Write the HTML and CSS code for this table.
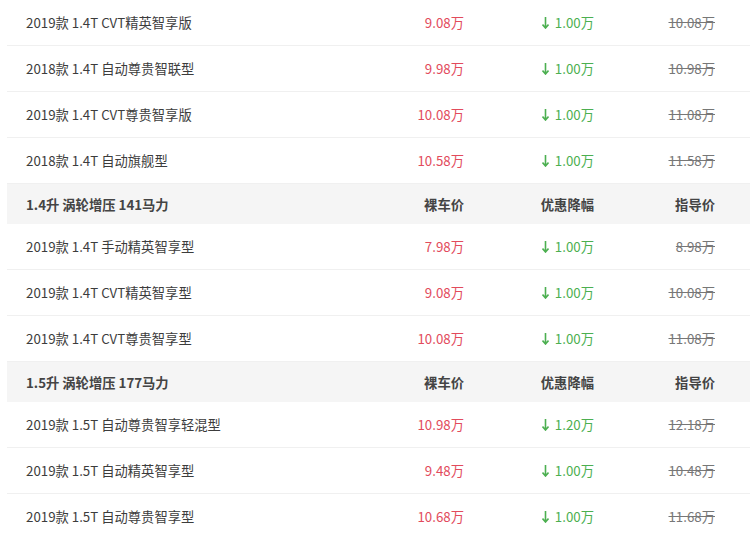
FILE: index.html
```html
<!DOCTYPE html>
<html lang="zh-CN">
<head>
    <meta charset="UTF-8">
    <title>车型报价</title>
    <link rel="stylesheet" href="styles.css">
</head>
<body>
    <div class="price-table">
        <div class="row"><span class="name">2019款 1.4T CVT精英智享版</span><span class="price">9.08万</span><span class="cut"><i class="arrow"></i>1.00万</span><span class="guide">10.08万</span></div>
        <div class="row"><span class="name">2018款 1.4T 自动尊贵智联型</span><span class="price">9.98万</span><span class="cut"><i class="arrow"></i>1.00万</span><span class="guide">10.98万</span></div>
        <div class="row"><span class="name">2019款 1.4T CVT尊贵智享版</span><span class="price">10.08万</span><span class="cut"><i class="arrow"></i>1.00万</span><span class="guide">11.08万</span></div>
        <div class="row"><span class="name">2018款 1.4T 自动旗舰型</span><span class="price">10.58万</span><span class="cut"><i class="arrow"></i>1.00万</span><span class="guide">11.58万</span></div>

        <div class="row head"><span class="name">1.4升 涡轮增压 141马力</span><span>裸车价</span><span>优惠降幅</span><span>指导价</span></div>
        <div class="row"><span class="name">2019款 1.4T 手动精英智享型</span><span class="price">7.98万</span><span class="cut"><i class="arrow"></i>1.00万</span><span class="guide">8.98万</span></div>
        <div class="row"><span class="name">2019款 1.4T CVT精英智享型</span><span class="price">9.08万</span><span class="cut"><i class="arrow"></i>1.00万</span><span class="guide">10.08万</span></div>
        <div class="row"><span class="name">2019款 1.4T CVT尊贵智享型</span><span class="price">10.08万</span><span class="cut"><i class="arrow"></i>1.00万</span><span class="guide">11.08万</span></div>

        <div class="row head"><span class="name">1.5升 涡轮增压 177马力</span><span>裸车价</span><span>优惠降幅</span><span>指导价</span></div>
        <div class="row"><span class="name">2019款 1.5T 自动尊贵智享轻混型</span><span class="price">10.98万</span><span class="cut"><i class="arrow"></i>1.20万</span><span class="guide">12.18万</span></div>
        <div class="row"><span class="name">2019款 1.5T 自动精英智享型</span><span class="price">9.48万</span><span class="cut"><i class="arrow"></i>1.00万</span><span class="guide">10.48万</span></div>
        <div class="row"><span class="name">2019款 1.5T 自动尊贵智享型</span><span class="price">10.68万</span><span class="cut"><i class="arrow"></i>1.00万</span><span class="guide">11.68万</span></div>
    </div>
</body>
</html>
```

FILE: styles.css
```css
* {
    margin: 0;
    padding: 0;
    box-sizing: border-box;
}

body {
    font-family: "Noto Sans CJK SC", "Noto Sans", sans-serif;
    font-size: 13.3px;
    color: #3c3c3c;
    background: #fff;
}

.price-table {
    margin-left: 7px;
}

.row {
    display: grid;
    grid-template-columns: 1fr 120px 130px 121px;
    align-items: center;
    height: 46px;
    padding: 0 35px 0 19px;
    border-bottom: 1px solid #f0f0f0;
    text-align: right;
}

.row .name {
    text-align: left;
}

.row.head {
    height: 40px;
    background: #f5f5f5;
    border-bottom: none;
    font-weight: bold;
    color: #444;
}

.price {
    color: #e24b5c;
}

.cut {
    color: #4caf50;
}

.arrow {
    display: inline-block;
    width: 7px;
    height: 12px;
    margin-right: 6px;
    vertical-align: -1px;
    background: url("data:image/svg+xml,%3Csvg xmlns='http://www.w3.org/2000/svg' width='7' height='12'%3E%3Cpath d='M3.5 0V11M0.5 7.5L3.5 11L6.5 7.5' fill='none' stroke='%234caf50' stroke-width='1.6'/%3E%3C/svg%3E") no-repeat;
}

.guide {
    color: #777;
    text-decoration: line-through;
}
```
